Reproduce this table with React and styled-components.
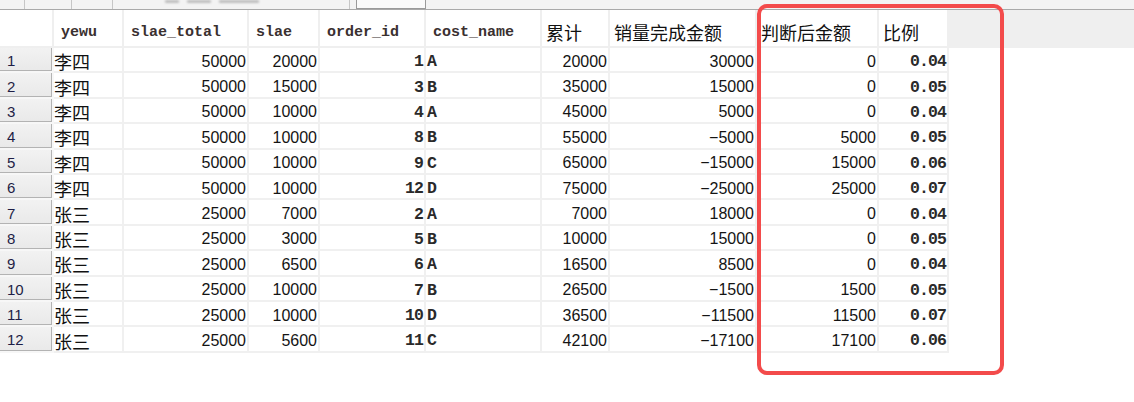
import React from "react";
import styled, { createGlobalStyle, css } from "styled-components";

const Global = createGlobalStyle`
  html, body { margin: 0; padding: 0; background: #ffffff; }
  body { font-family: "Liberation Sans", "Noto Sans CJK SC", sans-serif; }
`;

const fonts = {
  sans: css`font-family: "Liberation Sans", "Noto Sans CJK SC", sans-serif; font-size: 16px; color: #141414;`,
  mono: css`font-family: "Liberation Mono", "Noto Sans CJK SC", monospace; font-size: 16.5px; letter-spacing: -0.9px; font-weight: 700; color: #2a2a2a;`,
  cjk: css`font-family: "Noto Sans CJK SC", "Liberation Sans", sans-serif; font-size: 18px; color: #111;`,
};

const Page = styled.div`
  position: relative;
  width: 1134px;
  height: 402px;
  overflow: hidden;
  background: #fff;
`;

const Toolbar = styled.div`
  display: flex;
  align-items: flex-end;
  height: 9px;
  background: #f3f3f3;
  border-bottom: 1px solid #a9a9a9;
  overflow: hidden;
`;

const ToolSeg = styled.div`
  flex: none;
  width: ${(p) => p.$w}px;
  height: 9px;
  border-right: 1px solid #c6c6c6;
  box-sizing: border-box;
  display: flex;
  align-items: flex-start;
  gap: 8px;
  padding-left: ${(p) => p.$pad || 0}px;
`;

const ToolTab = styled.div`
  flex: none;
  width: ${(p) => p.$w}px;
  height: 9px;
  margin-left: 6px;
  box-sizing: border-box;
  border: 1px solid #9a9a9a;
  border-top: none;
  background: #fafafa;
`;

const ToolBlot = styled.span`
  flex: none;
  width: ${(p) => p.$w}px;
  height: 3px;
  background: #9a9a9a;
  border-radius: 1px;
  filter: blur(0.8px);
  opacity: 0.6;
`;

const HeaderRow = styled.div`
  display: flex;
  height: 38px;
  background: #efefef;
`;

const HeaderCell = styled.div`
  flex: none;
  box-sizing: border-box;
  width: ${(p) => p.$w}px;
  background: #ffffff;
  border-right: 2px solid #efefef;
  border-bottom: 2px solid #efefef;
  display: flex;
  align-items: center;
  padding: 8px 0 0 ${(p) => (p.$font === "cjk" ? 4 : 7)}px;
  white-space: nowrap;
  overflow: hidden;
  ${(p) => (p.$font === "cjk" ? fonts.cjk : css`font-family: "Liberation Mono", monospace; font-size: 15px; font-weight: 700; color: #3a3030;`)}
`;

const DataRow = styled.div`
  display: flex;
  height: 25.4px;
  background: #fff;
`;

const RowNum = styled.div`
  flex: none;
  box-sizing: border-box;
  width: 54px;
  border-right: 2px solid #f7f7f7;
  border-bottom: 2px solid #f7f7f7;
  background: linear-gradient(#f2f2f2, #e9e9e9);
  box-shadow: inset -1px -1px 0 #b3b3b3;
  display: flex;
  align-items: center;
  padding: 2px 0 0 7px;
  font-family: "Liberation Sans", sans-serif;
  font-size: 15px;
  color: #1e1e46;
`;

const Cell = styled.div`
  flex: none;
  box-sizing: border-box;
  width: ${(p) => p.$w}px;
  border-right: 2px solid #f0f0f0;
  border-bottom: 2px solid #f0f0f0;
  display: flex;
  align-items: center;
  justify-content: ${(p) => (p.$align === "right" ? "flex-end" : "flex-start")};
  padding: ${(p) => (p.$font === "cjk" ? "3px 0 0 0" : "4px 1px 0 1px")};
  white-space: nowrap;
  overflow: hidden;
  ${(p) => fonts[p.$font]}
`;

const Highlight = styled.div`
  position: absolute;
  left: 757px;
  top: 4px;
  width: 247px;
  height: 371px;
  box-sizing: border-box;
  border: 4px solid #f34b4b;
  border-radius: 10px;
  pointer-events: none;
`;

const columns = [
  { title: "yewu", w: 70, align: "left", font: "cjk", hf: "mono" },
  { title: "slae_total", w: 125, align: "right", font: "sans", hf: "mono" },
  { title: "slae", w: 71, align: "right", font: "sans", hf: "mono" },
  { title: "order_id", w: 106, align: "right", font: "mono", hf: "mono" },
  { title: "cost_name", w: 116, align: "left", font: "mono", hf: "mono" },
  { title: "累计", w: 68, align: "right", font: "sans", hf: "cjk" },
  { title: "销量完成金额", w: 147, align: "right", font: "sans", hf: "cjk" },
  { title: "判断后金额", w: 122, align: "right", font: "sans", hf: "cjk" },
  { title: "比例", w: 70, align: "right", font: "mono", hf: "cjk" },
];

const rows = [
  ["李四", 50000, 20000, 1, "A", 20000, 30000, 0, "0.04"],
  ["李四", 50000, 15000, 3, "B", 35000, 15000, 0, "0.05"],
  ["李四", 50000, 10000, 4, "A", 45000, 5000, 0, "0.04"],
  ["李四", 50000, 10000, 8, "B", 55000, -5000, 5000, "0.05"],
  ["李四", 50000, 10000, 9, "C", 65000, -15000, 15000, "0.06"],
  ["李四", 50000, 10000, 12, "D", 75000, -25000, 25000, "0.07"],
  ["张三", 25000, 7000, 2, "A", 7000, 18000, 0, "0.04"],
  ["张三", 25000, 3000, 5, "B", 10000, 15000, 0, "0.05"],
  ["张三", 25000, 6500, 6, "A", 16500, 8500, 0, "0.04"],
  ["张三", 25000, 10000, 7, "B", 26500, -1500, 1500, "0.05"],
  ["张三", 25000, 10000, 10, "D", 36500, -11500, 11500, "0.07"],
  ["张三", 25000, 5600, 11, "C", 42100, -17100, 17100, "0.06"],
];

const fmt = (v) => (typeof v === "number" && v < 0 ? "\u2212" + Math.abs(v) : String(v));

export default function App() {
  return (
    <Page>
      <Global />
      <Toolbar>
        <ToolSeg $w={25} />
        <ToolSeg $w={47} />
        <ToolSeg $w={41} />
        <ToolSeg $w={237} $pad={52}>
          <ToolBlot $w={14} />
          <ToolBlot $w={24} />
          <ToolBlot $w={40} />
        </ToolSeg>
        <ToolTab $w={70} />
      </Toolbar>
      <HeaderRow>
        <HeaderCell $w={54} $font="mono" />
        {columns.map((c) => (
          <HeaderCell key={c.title} $w={c.w} $font={c.hf}>
            {c.title}
          </HeaderCell>
        ))}
      </HeaderRow>
      {rows.map((r, i) => (
        <DataRow key={i}>
          <RowNum>{i + 1}</RowNum>
          {columns.map((c, j) => (
            <Cell key={c.title} $w={c.w} $align={c.align} $font={c.font}>
              {fmt(r[j])}
            </Cell>
          ))}
        </DataRow>
      ))}
      <Highlight />
    </Page>
  );
}
